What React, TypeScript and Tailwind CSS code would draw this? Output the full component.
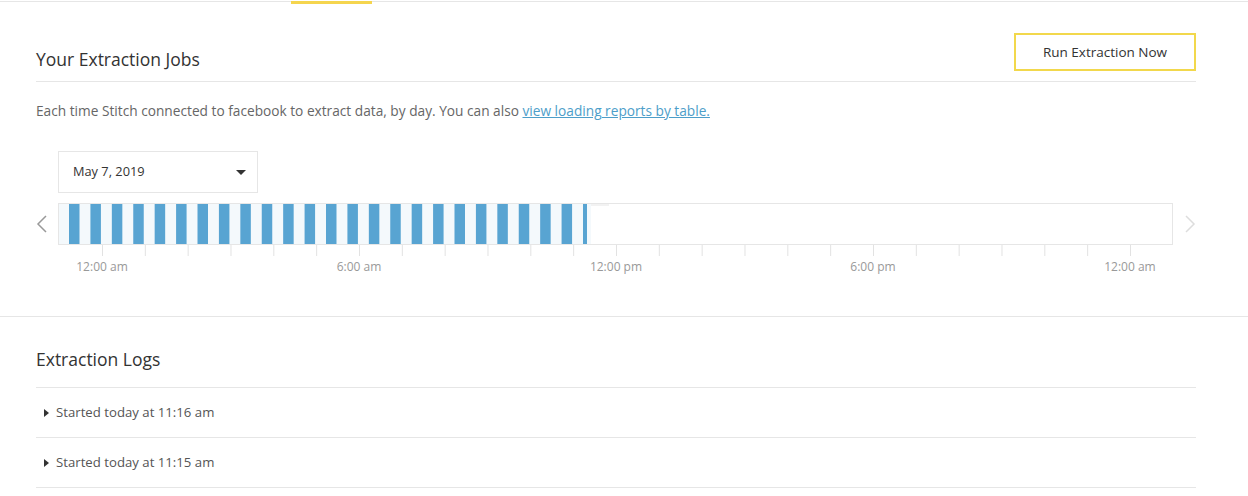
import React from "react";

const HOUR = 42.833;
const ticks = Array.from({ length: 25 }, (_, k) => 44 + HOUR * k);
const bars = Array.from({ length: 25 }, (_, i) => ({
  x: 11 + i * (HOUR / 2),
  w: i === 24 ? 4 : 10.5,
}));
const labels = [
  { t: "12:00 am", x: 44 },
  { t: "6:00 am", x: 44 + HOUR * 6 },
  { t: "12:00 pm", x: 44 + HOUR * 12 },
  { t: "6:00 pm", x: 44 + HOUR * 18 },
  { t: "12:00 am", x: 44 + HOUR * 24 },
];

function Caret() {
  return (
    <svg width="5" height="8" viewBox="0 0 5 8" className="shrink-0">
      <path d="M0 0 L5 4 L0 8 Z" fill="#333" />
    </svg>
  );
}

export default function App() {
  return (
    <div className="w-[1248px] h-[496px] overflow-hidden bg-white text-[#333] font-['Open_Sans',sans-serif]">
      <div className="relative h-[3px]">
        <div className="mt-px h-px bg-[#e6e6e6]" />
        <div className="absolute left-[291px] top-0 w-[81px] h-[3px] bg-[#f5d54e]" />
      </div>

      <div className="px-[36px] pt-[29px]">
        <div className="flex items-end justify-between border-b border-[#e6e6e6] pb-[10px] w-[1160px]">
          <h2 className="text-[17.5px] leading-[24px] text-[#333]">Your Extraction Jobs</h2>
          <button className="w-[182px] h-[38px] border-2 border-[#f2d84c] text-[13.5px] text-[#333] bg-white">
            Run Extraction Now
          </button>
        </div>

        <p className="mt-[19px] text-[13.7px] leading-[20px] text-[#666]">
          Each time Stitch connected to facebook to extract data, by day. You can also{" "}
          <span className="text-[#4d9ec9] underline">view loading reports by table.</span>
        </p>

        <div className="mt-[30px] ml-[22px] w-[200px] h-[42px] border border-[#e6e6e6] flex items-center justify-between pl-[14px] pr-[11px]">
          <span className="text-[12.8px] text-[#333]">May 7, 2019</span>
          <svg width="10" height="5" viewBox="0 0 10 5">
            <path d="M0 0 H10 L5 5 Z" fill="#333" />
          </svg>
        </div>

        <div className="mt-[10px] flex">
          <div className="w-[22px] h-[42px] flex items-center">
            <svg width="12" height="18" viewBox="0 0 12 18">
              <path d="M10 1 L2 9 L10 17" fill="none" stroke="#999" strokeWidth="1.5" />
            </svg>
          </div>
          <div className="w-[1115px]">
            <div className="relative h-[42px] border border-[#e6e6e6]">
              <svg width="1113" height="40" className="block">
                <rect x="0" y="0" width="532" height="40" fill="#f4f9fc" />
                <rect x="532" y="0" width="18" height="2" fill="#f2f2f2" />
                {bars.map((b, i) => (
                  <rect key={i} x={b.x - 1} y="0" width={b.w} height="40" fill="#58a4d2" />
                ))}
              </svg>
            </div>
            <svg width="1115" height="11" className="block">
              {ticks.map((x, i) => (
                <line key={i} x1={x + 0.5} x2={x + 0.5} y1="0" y2="11" stroke="#e2e2e2" strokeWidth="1" />
              ))}
            </svg>
            <div className="relative h-[20px] text-[12px] text-[#999]">
              {labels.map((l, i) => (
                <span
                  key={i}
                  className="absolute top-[1px] -translate-x-1/2 whitespace-nowrap leading-[20px]"
                  style={{ left: l.x }}
                >
                  {l.t}
                </span>
              ))}
            </div>
          </div>
          <div className="w-[23px] h-[42px] flex items-center justify-end">
            <svg width="12" height="18" viewBox="0 0 12 18">
              <path d="M2 1 L10 9 L2 17" fill="none" stroke="#ddd" strokeWidth="1.5" />
            </svg>
          </div>
        </div>
      </div>

      <div className="mt-[40px] border-t border-[#e6e6e6] px-[36px] pt-[30px]">
        <div className="w-[1160px]">
          <h2 className="text-[17.5px] leading-[24px] text-[#333] pb-[16px] border-b border-[#e6e6e6]">Extraction Logs</h2>
          {["Started today at 11:16 am", "Started today at 11:15 am"].map((t) => (
            <div key={t} className="h-[50px] border-b border-[#e6e6e6] flex items-center gap-[7px] pl-[8px]">
              <Caret />
              <span className="text-[13.2px] text-[#555]">{t}</span>
            </div>
          ))}
        </div>
      </div>
    </div>
  );
}
